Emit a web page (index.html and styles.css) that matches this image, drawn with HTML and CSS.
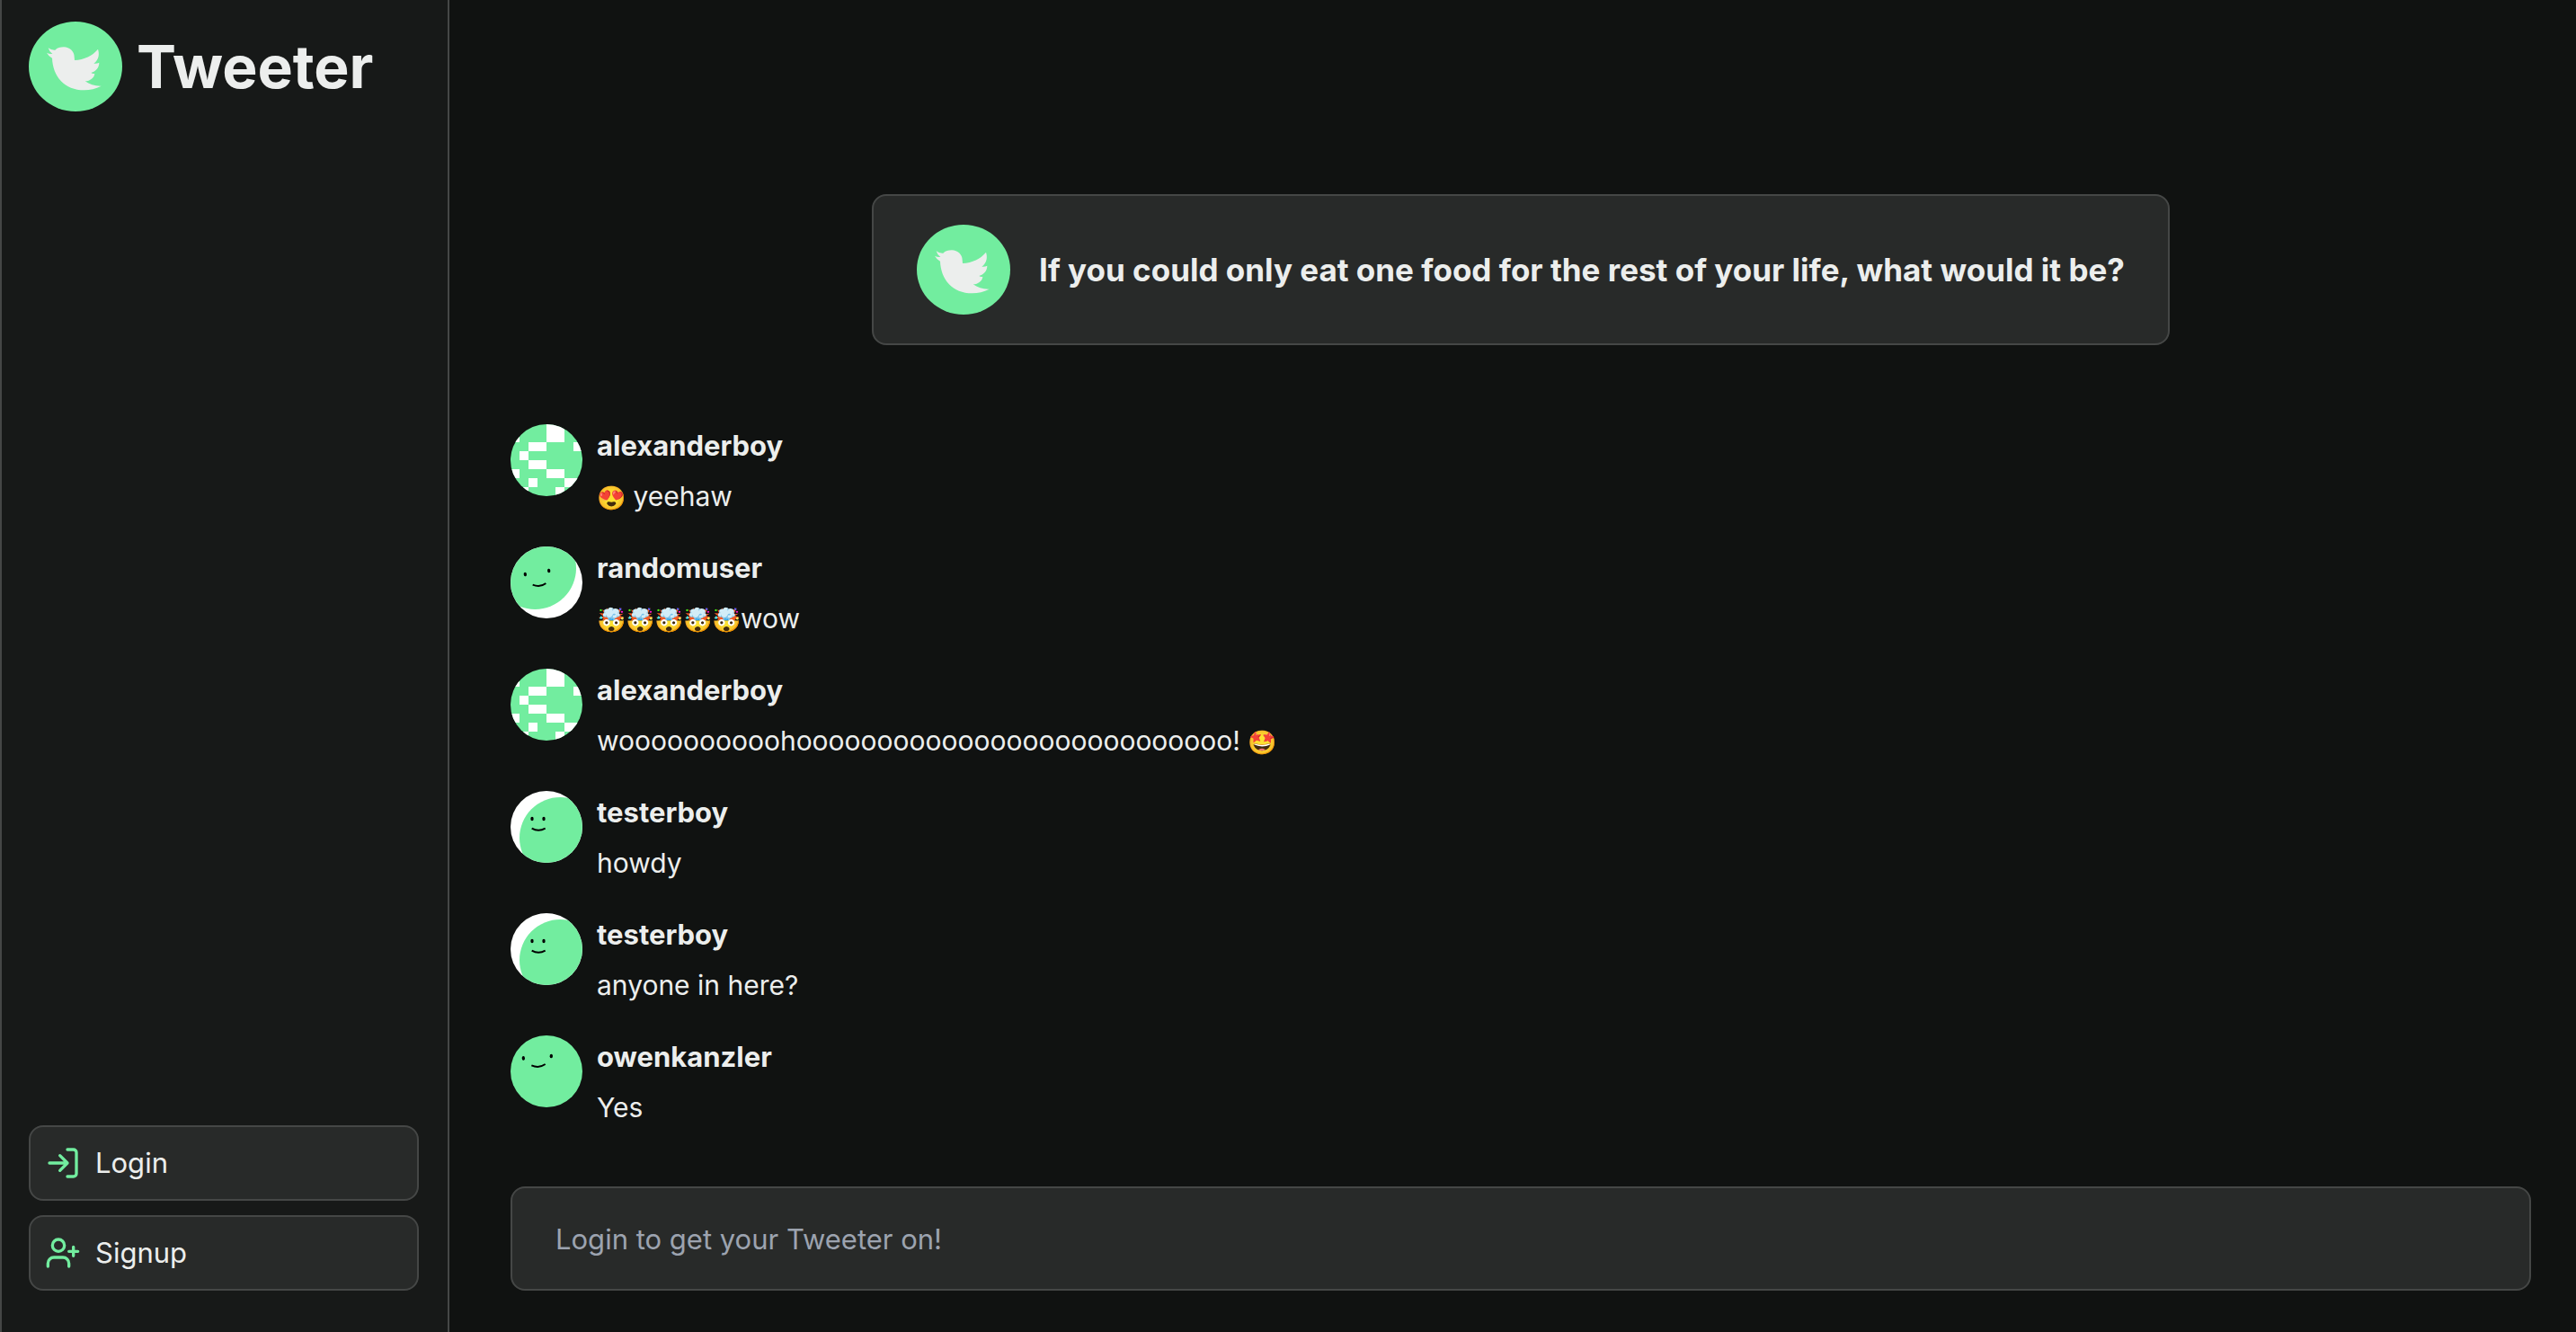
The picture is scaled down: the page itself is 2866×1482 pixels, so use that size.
FILE: index.html
```html
<!DOCTYPE html>
<html lang="en">
<head>
<meta charset="utf-8">
<meta name="viewport" content="width=device-width, initial-scale=1">
<title>Tweeter</title>
<link rel="stylesheet" href="styles.css">
</head>
<body>
<svg class="sprite" aria-hidden="true">
  <symbol id="logo" viewBox="95 72 312 300">
    <ellipse cx="251" cy="222" rx="156" ry="150" fill="#72ed9f"/>
    <path fill="#eceeed" d="M160 160Q170 168 183 167C190 160 200 157 212 157C232 157 247 172 247 190L248 201C280 199 308 186 326 164C331 180 330 198 312 212Q322 213 330 209C330 226 318 238 303 243Q309 247 315 245C314 260 300 270 283 271C298 282 318 288 337 287C318 296 300 301 280 301C215 301 175 255 173 194Q162 189 155 176Q163 181 174 180Q163 172 160 160Z"/>
  </symbol>
  <symbol id="pixels" viewBox="0 0 8 8">
    <rect width="8" height="8" fill="#72ed9f"/>
    <path fill="#fff" shape-rendering="crispEdges" d="M4 0h2v2h-2zM0 1h1v1h-1zM2 2h2v1h-2zM7 2h1v1h-1zM1 3h1v1h-1zM2 4h2v1h-2zM0 5h1v1h-1zM4 5h2v1h-2zM2 6h1v1h-1zM6 6h2v1h-2zM1 7h1v1h-1zM5 7h1v1h-1z"/>
  </symbol>
  <symbol id="face-low" viewBox="0 0 240 240">
    <rect width="240" height="240" fill="#fff"/>
    <circle cx="82" cy="73" r="137" fill="#72ed9f"/>
    <ellipse cx="49" cy="93" rx="5" ry="7" transform="rotate(-8 49 93)"/>
    <ellipse cx="128" cy="81" rx="5" ry="7" transform="rotate(-8 128 81)"/>
    <path d="M74 128Q99 138 118 123" fill="none" stroke="#000" stroke-width="6"/>
  </symbol>
  <symbol id="face-high" viewBox="0 0 240 240">
    <rect width="240" height="240" fill="#fff"/>
    <circle cx="166" cy="157" r="136" fill="#72ed9f"/>
    <ellipse cx="72" cy="93" rx="5" ry="7"/>
    <ellipse cx="111" cy="93" rx="5" ry="7"/>
    <path d="M71 125Q93 138 116 125" fill="none" stroke="#000" stroke-width="6"/>
  </symbol>
  <symbol id="face-full" viewBox="0 0 240 240">
    <rect width="240" height="240" fill="#72ed9f"/>
    <ellipse cx="43" cy="76" rx="5" ry="7" transform="rotate(-5 43 76)"/>
    <ellipse cx="136" cy="69" rx="5" ry="7" transform="rotate(-5 136 69)"/>
    <path d="M70 100Q95 111 116 96" fill="none" stroke="#000" stroke-width="6"/>
  </symbol>
</svg>

<div class="app">
  <aside class="sidebar">
    <header class="brand">
      <svg class="logo" aria-hidden="true"><use href="#logo"/></svg>
      <h1 class="brand-name">Tweeter</h1>
    </header>
    <nav class="actions">
      <button class="action" type="button">
        <svg class="icon" viewBox="0 0 24 24" aria-hidden="true"><path d="M15 3h4a2 2 0 0 1 2 2v14a2 2 0 0 1-2 2h-4M10 17l5-5-5-5M15 12H3"/></svg>
        Login
      </button>
      <button class="action" type="button">
        <svg class="icon" viewBox="0 0 24 24" aria-hidden="true"><path d="M16 21v-2a4 4 0 0 0-4-4H6a4 4 0 0 0-4 4v2M19 8v6M22 11h-6"/><circle cx="9" cy="7" r="4"/></svg>
        Signup
      </button>
    </nav>
  </aside>

  <main class="feed">
    <section class="prompt">
      <svg class="logo" aria-hidden="true"><use href="#logo"/></svg>
      <h2 class="question">If you could only eat one food for the rest of your life, what would it be?</h2>
    </section>

    <ul class="messages">
      <li class="message">
        <svg class="avatar" aria-hidden="true"><use href="#pixels"/></svg>
        <div><h3 class="author">alexanderboy</h3><p class="text"><span class="emoji">😍</span> yeehaw</p></div>
      </li>
      <li class="message">
        <svg class="avatar" aria-hidden="true"><use href="#face-low"/></svg>
        <div><h3 class="author">randomuser</h3><p class="text"><span class="emoji">🤯🤯🤯🤯🤯</span>wow</p></div>
      </li>
      <li class="message">
        <svg class="avatar" aria-hidden="true"><use href="#pixels"/></svg>
        <div><h3 class="author">alexanderboy</h3><p class="text">woooooooooohooooooooooooooooooooooooooo! <span class="emoji">🤩</span></p></div>
      </li>
      <li class="message">
        <svg class="avatar" aria-hidden="true"><use href="#face-high"/></svg>
        <div><h3 class="author">testerboy</h3><p class="text">howdy</p></div>
      </li>
      <li class="message">
        <svg class="avatar" aria-hidden="true"><use href="#face-high"/></svg>
        <div><h3 class="author">testerboy</h3><p class="text">anyone in here?</p></div>
      </li>
      <li class="message">
        <svg class="avatar" aria-hidden="true"><use href="#face-full"/></svg>
        <div><h3 class="author">owenkanzler</h3><p class="text">Yes</p></div>
      </li>
    </ul>

    <input class="composer" type="text" placeholder="Login to get your Tweeter on!" aria-label="Message">
  </main>
</div>
</body>
</html>
```
FILE: styles.css
```css
:root {
  --page: #101211;
  --panel: #171918;
  --surface: #282a29;
  --line: #454746;
  --text: #eceeed;
  --muted: #9ca3af;
  --accent: #72ed9f;
}

*, *::before, *::after { box-sizing: border-box; }

body {
  margin: 0;
  background: var(--page);
  color: var(--text);
  font: 400 31px/56px Inter, "Liberation Sans", sans-serif;
}

h1, h2, h3, p, ul { margin: 0; padding: 0; }

.sprite { position: absolute; width: 0; height: 0; }

.app { display: flex; min-height: 100vh; }

.sidebar {
  flex: 0 0 500px;
  display: flex;
  flex-direction: column;
  justify-content: space-between;
  padding: 24px 32px 46px 30px;
  background: var(--panel);
  border: solid var(--line);
  border-width: 0 2px;
}

.brand { display: flex; align-items: center; gap: 16px; }
.logo { flex: none; width: 104px; height: 100px; }
.brand-name { font-size: 66px; line-height: 80px; font-weight: 700; }

.actions { display: flex; flex-direction: column; gap: 16px; }

.action {
  display: flex;
  align-items: center;
  gap: 16px;
  padding: 12px 16px;
  background: var(--surface);
  border: 2px solid var(--line);
  border-radius: 16px;
  color: inherit;
  font: inherit;
  text-align: left;
  cursor: pointer;
}

.icon {
  width: 40px;
  height: 40px;
  fill: none;
  stroke: var(--accent);
  stroke-width: 2;
  stroke-linecap: round;
  stroke-linejoin: round;
}

.feed {
  flex: 1;
  min-width: 0;
  display: flex;
  flex-direction: column;
  padding: 216px 50px 46px 68px;
}

.prompt {
  align-self: center;
  display: flex;
  align-items: center;
  gap: 32px;
  padding: 32px 48px;
  background: var(--surface);
  border: 2px solid var(--line);
  border-radius: 16px;
}

.question { font-size: 35px; line-height: 56px; font-weight: 700; }

.messages {
  flex: 1;
  display: flex;
  flex-direction: column;
  gap: 24px;
  margin: 84px 0 56px;
  list-style: none;
}

.message { display: flex; gap: 16px; }

.avatar {
  flex: none;
  width: 80px;
  height: 80px;
  margin-top: 4px;
  border-radius: 50%;
}

.author { font-size: 31px; font-weight: 700; }
.text { height: 56px; font-size: 30px; }
.emoji { font-size: 26px; }

.composer {
  width: 100%;
  height: 116px;
  padding: 0 48px;
  background: var(--surface);
  border: 2px solid var(--line);
  border-radius: 16px;
  color: inherit;
  font: inherit;
}
.composer::placeholder { color: var(--muted); opacity: 1; }
```
